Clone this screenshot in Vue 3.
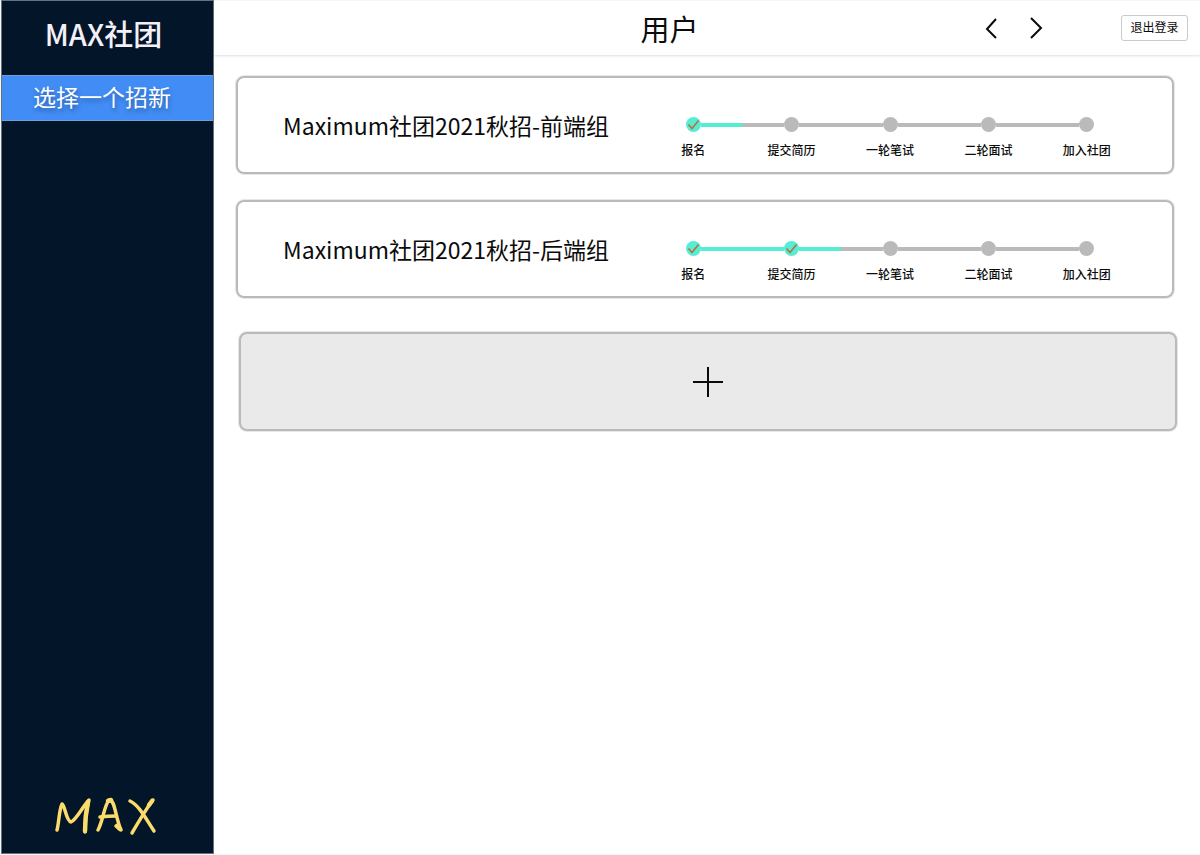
<script setup>
const stepNames = ['报名', '提交简历', '一轮笔试', '二轮面试', '加入社团']
const recruitments = [
  { title: 'Maximum社团2021秋招-前端组', done: 1 },
  { title: 'Maximum社团2021秋招-后端组', done: 2 },
]
</script>

<template>
  <div class="layout">
    <aside class="sidebar">
      <h1 class="brand">MAX社团</h1>
      <nav>
        <a class="nav-item" href="#recruitments">选择一个招新</a>
      </nav>
      <svg class="signature" viewBox="0 0 104 42" role="img" aria-label="MAX">
        <path d="M3 34C5 27 5 14 8 8C11 9 12 25 17 26C22 24 27 13 35 4C32 14 31 26 31 36" />
        <path d="M44 34C49 25 50 10 55 4C61 3 61 20 67 34L62 30" />
        <path d="M46 21Q54 20 62 20" />
        <path d="M76 5C85 9 92 23 100 35" />
        <path d="M99 4C92 13 85 25 78 37" />
        <path class="thick" d="M34 6Q31 20 31 35M54 5L57 4M98 5L95 9M63 30L66 33" />
      </svg>
    </aside>

    <div class="page">
      <header class="topbar">
        <h2 class="heading">用户</h2>
        <div class="arrows">
          <button type="button" aria-label="后退">
            <svg viewBox="0 0 16 24"><path d="M12 3L3 13L12 22" /></svg>
          </button>
          <button type="button" aria-label="前进">
            <svg viewBox="0 0 16 24"><path d="M3 2L13 12L3 22" /></svg>
          </button>
        </div>
        <button type="button" class="logout">退出登录</button>
      </header>

      <main id="recruitments" class="content">
        <section v-for="item in recruitments" :key="item.title" class="card">
          <h3 class="title">{{ item.title }}</h3>
          <ol class="steps">
            <li
              v-for="(name, i) in stepNames"
              :key="name"
              class="step"
              :class="{ done: i < item.done }"
            >
              <span class="track">
                <span class="dot">
                  <svg v-if="i < item.done" viewBox="0 0 15 15">
                    <path d="M2.5 7.5L6 11.5L12.5 3.5" />
                  </svg>
                </span>
              </span>
              <span class="label">{{ name }}</span>
            </li>
          </ol>
        </section>
        <button type="button" class="add" aria-label="添加招新">
          <svg viewBox="0 0 30 30"><path d="M15 0V30M0 15H30" /></svg>
        </button>
      </main>
    </div>
  </div>
</template>

<style>
body {
  background: #fff;
}
</style>

<style scoped>
.layout {
  display: grid;
  grid-template-columns: 214px 1fr;
  min-height: 100vh;
  box-sizing: border-box;
  padding-bottom: 1px;
  background: #f7f7f7;
  font-family: "Noto Sans CJK SC", sans-serif;
  color: #0b0b0b;
}

h1, h2, h3, ol {
  margin: 0;
  padding: 0;
  font-weight: 400;
}

button {
  padding: 0;
  border: 0;
  background: none;
  font: inherit;
  color: inherit;
  cursor: pointer;
}

svg {
  display: block;
  fill: none;
  stroke: currentColor;
}

.sidebar {
  display: flex;
  flex-direction: column;
  box-sizing: border-box;
  border: 1px solid #66727e;
  margin-left: 1px;
  background: #021529;
}

.brand {
  height: 74px;
  box-sizing: border-box;
  padding: 10px 8px 0 0;
  font-size: 29px;
  font-weight: 500;
  line-height: 44px;
  text-align: center;
  color: #f3f0f8;
}

.nav-item {
  display: block;
  padding: 0 0 4px 31px;
  border-top: 1px solid #6f9fd8;
  border-bottom: 1px solid #6f9fd8;
  background: #418cf5;
  font-size: 23px;
  font-weight: 400;
  line-height: 40px;
  color: #fff;
  text-decoration: none;
  text-shadow: 1px 3px 4px rgba(0, 0, 0, 0.3);
}

.signature {
  width: 104px;
  height: 42px;
  margin: auto 0 15px 52px;
  color: #fadb6b;
  stroke-width: 3.5;
  stroke-linecap: round;
  stroke-linejoin: round;
}

.signature .thick {
  stroke-width: 4.5;
}

.page {
  min-width: 0;
  background: #fff;
}

.topbar {
  display: grid;
  grid-template-columns: 1fr auto 1fr auto;
  align-items: center;
  height: 55px;
  box-sizing: border-box;
  padding: 0 12px 0 4px;
  border-top: 1px solid #f7f7f7;
  box-shadow: 0 1px 2px rgba(0, 0, 0, 0.12);
}

.heading {
  grid-column: 2;
  font-size: 29px;
  line-height: 54px;
}

.arrows {
  display: flex;
  justify-content: flex-end;
  gap: 28px;
  padding-right: 77px;
}

.arrows svg {
  width: 16px;
  height: 24px;
  stroke-width: 2;
}

.logout {
  width: 67px;
  height: 26px;
  padding-bottom: 2px;
  border: 1px solid #cacaca;
  border-radius: 3px;
  font-size: 12px;
  line-height: 22px;
}

.content {
  display: flex;
  flex-direction: column;
  gap: 26px;
  padding: 21px 26px 24px 22px;
}

.card {
  display: flex;
  justify-content: space-between;
  box-sizing: border-box;
  height: 98px;
  padding: 0 36px 0 45px;
  border: 2px solid #bababa;
  border-radius: 8px;
  box-shadow: 0 0 0 1px rgba(186, 186, 186, 0.35);
}

.title {
  font-size: 23px;
  line-height: 95px;
  white-space: nowrap;
}

.steps {
  display: grid;
  grid-template-columns: repeat(5, 1fr);
  flex: 0 0 492px;
  padding-top: 39px;
  list-style: none;
}

.step {
  display: flex;
  flex-direction: column;
  align-items: center;
  gap: 8px;
  color: #bababa;
}

.step.done {
  color: #55edd4;
}

.track {
  display: flex;
  align-items: center;
  width: 100%;
}

.track::before,
.track::after {
  content: "";
  flex: 1;
  height: 4px;
  background: currentColor;
}

.step:first-child .track::before,
.step:last-child .track::after {
  background: none;
}

.dot {
  width: 15px;
  height: 15px;
  border-radius: 50%;
  background: currentColor;
}

.dot svg {
  color: #c46a38;
  stroke-width: 1.5;
}

.label {
  font-size: 12px;
  font-weight: 500;
  line-height: 20px;
  color: #0b0b0b;
}

.add {
  display: flex;
  align-items: center;
  justify-content: center;
  box-sizing: border-box;
  height: 99px;
  margin: 8px -3px 0 3px;
  border: 2px solid #bababa;
  border-radius: 8px;
  background: #eaeaea;
  box-shadow: 0 0 0 1px rgba(186, 186, 186, 0.35);
}

.add svg {
  width: 30px;
  height: 30px;
  stroke-width: 2;
}
</style>
